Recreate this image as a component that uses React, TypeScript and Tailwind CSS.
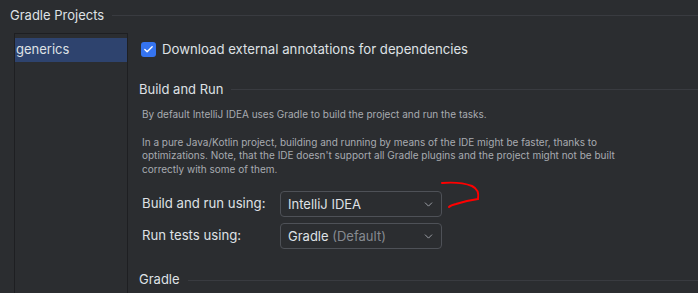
import { ChevronDown, Check } from 'lucide-react';

function Dropdown({ value, hint }: { value: string; hint?: string }) {
  return (
    <div className="flex h-[26px] w-[162px] items-center justify-between rounded-[4px] border border-[#4e5157] bg-[#2b2d30] pl-[7px] pr-[6px]">
      <span className="text-[13px] text-[#dfe1e5]">
        {value}
        {hint && <span className="text-[#868a91]"> {hint}</span>}
      </span>
      <ChevronDown size={13} strokeWidth={1.5} className="text-[#b4b8bf]" />
    </div>
  );
}

function SectionTitle({ title }: { title: string }) {
  return (
    <div className="flex items-center gap-[8px]">
      <span className="text-[13px] text-[#dfe1e5]">{title}</span>
      <div className="h-px flex-1 bg-[#393b40]" />
    </div>
  );
}

export default function App() {
  return (
    <main
      className="relative h-[293px] w-[698px] overflow-hidden bg-[#2b2d30] text-[#dfe1e5]"
      style={{ fontFamily: 'Inter, "Noto Sans", sans-serif' }}
    >
      {/* Header */}
      <div className="flex items-center gap-[8px] pl-[10px] pt-[5px]">
        <span className="text-[13px] leading-[20px]">Gradle Projects</span>
        <div className="h-px flex-1 bg-[#393b40]" />
      </div>

      <div className="flex pl-[14px] pt-[8px]">
        {/* Project list */}
        <div className="h-[260px] w-[114px] border-l border-r border-t border-[#1e1f22] pt-[4px]">
          <div className="flex h-[24px] items-center bg-[#2e436e] pl-[1px] text-[13px]">generics</div>
        </div>

        {/* Settings */}
        <div className="flex flex-1 flex-col pl-[11px]">
          <div className="mt-[7px] flex items-center gap-[6px] pl-[2px]">
            <div className="flex h-[15px] w-[15px] items-center justify-center rounded-[3px] bg-[#3574f0]">
              <Check size={11} strokeWidth={3} className="text-white" />
            </div>
            <span className="text-[13.2px]">Download external annotations for dependencies</span>
          </div>

          <div className="mt-[20px]">
            <SectionTitle title="Build and Run" />
          </div>

          <div className="mt-[9px] pl-[3px] text-[10px] leading-[13.5px] text-[#a8abb0]">
            <p>By default IntelliJ IDEA uses Gradle to build the project and run the tasks.</p>
            <p className="mt-[14px] w-[490px]">
              In a pure Java/Kotlin project, building and running by means of the IDE might be faster, thanks to
              optimizations. Note, that the IDE doesn't support all Gradle plugins and the project might not be built
              correctly with some of them.
            </p>
          </div>

          <div className="mt-[15px] grid grid-cols-[138px_auto] items-center gap-y-[6px] pl-[3px] text-[13.2px]">
            <span>Build and run using:</span>
            <Dropdown value="IntelliJ IDEA" />
            <span>Run tests using:</span>
            <Dropdown value="Gradle" hint="(Default)" />
          </div>

          <div className="mt-[21px]">
            <SectionTitle title="Gradle" />
          </div>
        </div>
      </div>

      {/* Red marker annotation */}
      <svg className="absolute left-[440px] top-[180px]" width="45" height="32" viewBox="0 0 45 32">
        <path
          d="M2 3 C14 2 24 3 32 6 C38 9 39 13 38 19 C30 20 22 22 16 24 C12 25 10 26 9 27"
          fill="none"
          stroke="#ff0000"
          strokeWidth="2"
          strokeLinecap="round"
        />
      </svg>
    </main>
  );
}
